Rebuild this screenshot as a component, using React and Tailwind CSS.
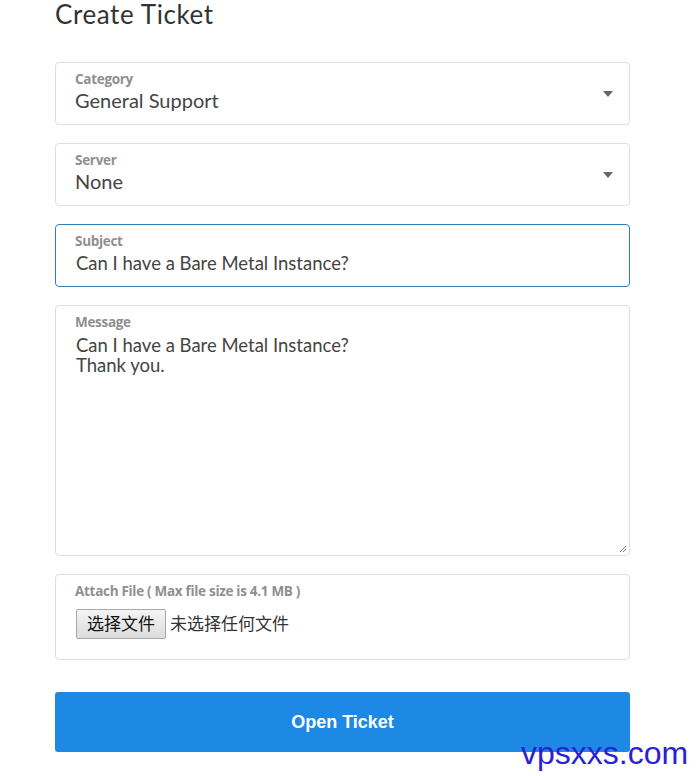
export default function App() {
  const font = { fontFamily: 'Lato, "Noto Sans CJK SC", sans-serif' }
  return (
    <div className="relative w-[699px] h-[776px] bg-white overflow-hidden font-['Lato','Noto_Sans_CJK_SC',sans-serif]">
      <div className="ml-[55px] w-[575px]">
        <h1 className="pt-px text-[26px] leading-[27px] text-[#333] font-normal tracking-[0.6px]">Create Ticket</h1>

        <div className="mt-[34px] flex flex-col gap-[18px]">
          <SelectBox label="Category" value="General Support" />
          <SelectBox label="Server" value="None" />

          <div className="h-[63px] rounded-[4px] border border-[#2e7fb8] pl-[19px] pt-[8px]">
            <Label>Subject</Label>
            <div className="mt-[2px] pl-px text-[18.5px] leading-[24px] text-[#444]">Can I have a Bare Metal Instance?</div>
          </div>

          <div className="relative h-[251px] rounded-[4px] border border-[#dedede] pl-[19px] pt-[8px]">
            <Label>Message</Label>
            <div className="mt-[5px] pl-px text-[18.5px] leading-[20px] text-[#444]">
              <div>Can I have a Bare Metal Instance?</div>
              <div>Thank you.</div>
            </div>
            <svg className="absolute right-[2px] bottom-[2px]" width="9" height="9" viewBox="0 0 9 9">
              <path d="M8 2 L2 8 M8 5 L5 8" stroke="#777" strokeWidth="1" />
            </svg>
          </div>

          <div className="h-[86px] rounded-[4px] border border-[#dedede] pl-[19px] pt-[8px]">
            <Label>Attach File ( Max file size is 4.1 MB )</Label>
            <div className="mt-[10px] flex items-center">
              <span className="ml-px h-[30px] w-[90px] flex items-center justify-center border border-[#a8a8a8] rounded-[2px] bg-gradient-to-b from-[#f4f4f4] to-[#dcdcdc] text-[17px] text-[#111]" style={font}>选择文件</span>
              <span className="ml-[4px] text-[17px] text-[#333]" style={font}>未选择任何文件</span>
            </div>
          </div>
        </div>

        <button className="mt-[32px] h-[60px] w-[575px] rounded-[3px] bg-[#1e88e5] text-white text-[18px] font-bold font-['Liberation_Sans',Arial,sans-serif]">
          Open Ticket
        </button>
      </div>

      <div className="absolute left-[521px] top-[735px] text-[32px] leading-[36px] text-[#2a1fd6] font-['Liberation_Sans',Arial,sans-serif]">vpsxxs.com</div>
    </div>
  )
}

function Label({ children }) {
  return (
    <div className="text-[13.5px] leading-[16px] font-bold text-[#8f8f8f] font-['Open_Sans',sans-serif] tracking-[-0.3px]">{children}</div>
  )
}

function SelectBox({ label, value }) {
  return (
    <div className="relative h-[63px] rounded-[4px] border border-[#dedede] pl-[19px] pt-[8px]">
      <Label>{label}</Label>
      <div className="mt-[1px] text-[20px] leading-[24px] text-[#444]">{value}</div>
      <svg className="absolute right-[16px] top-[28px]" width="10" height="6" viewBox="0 0 10 6">
        <path d="M0 0 L10 0 L5 6 Z" fill="#666" />
      </svg>
    </div>
  )
}
